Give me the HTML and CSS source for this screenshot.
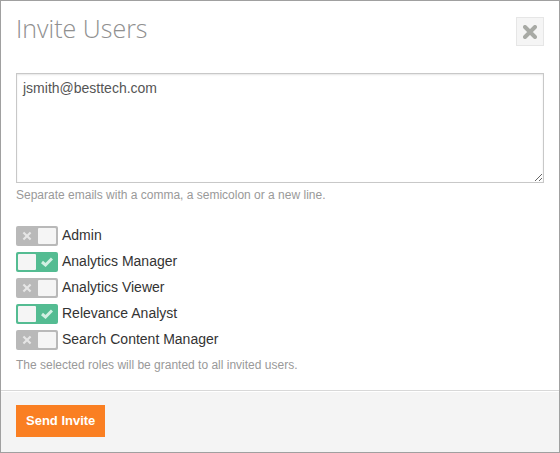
FILE: index.html
```html
<!DOCTYPE html>
<html lang="en">
<head>
  <meta charset="UTF-8" />
  <title>Invite Users</title>
  <link rel="stylesheet" href="styles.css">
</head>
<body>

  <!-- Shared icons -->
  <svg class="sprite" aria-hidden="true">
    <symbol id="cross" viewBox="0 0 14 14">
      <path d="M2 2 L12 12 M12 2 L2 12" />
    </symbol>
    <symbol id="check" viewBox="0 0 12 10">
      <path d="M1 5 L4.5 8 L11 1.5" />
    </symbol>
  </svg>

  <form class="modal">
    <div class="modal-header">
      <h1>Invite Users</h1>
      <button type="button" class="close" aria-label="Close">
        <svg class="icon"><use href="#cross" /></svg>
      </button>
    </div>

    <div class="modal-body">
      <textarea id="emails" aria-label="Emails" aria-describedby="emailsHint" spellcheck="false">jsmith@besttech.com</textarea>
      <p class="hint" id="emailsHint">Separate emails with a comma, a semicolon or a new line.</p>

      <div class="roles">
        <label class="role">
          <span class="switch">
            <input type="checkbox" name="role" value="admin" />
            <svg class="off"><use href="#cross" /></svg>
            <svg class="on"><use href="#check" /></svg>
          </span>
          Admin
        </label>
        <label class="role">
          <span class="switch">
            <input type="checkbox" name="role" value="analytics-manager" checked />
            <svg class="off"><use href="#cross" /></svg>
            <svg class="on"><use href="#check" /></svg>
          </span>
          Analytics Manager
        </label>
        <label class="role">
          <span class="switch">
            <input type="checkbox" name="role" value="analytics-viewer" />
            <svg class="off"><use href="#cross" /></svg>
            <svg class="on"><use href="#check" /></svg>
          </span>
          Analytics Viewer
        </label>
        <label class="role">
          <span class="switch">
            <input type="checkbox" name="role" value="relevance-analyst" checked />
            <svg class="off"><use href="#cross" /></svg>
            <svg class="on"><use href="#check" /></svg>
          </span>
          Relevance Analyst
        </label>
        <label class="role">
          <span class="switch">
            <input type="checkbox" name="role" value="search-content-manager" />
            <svg class="off"><use href="#cross" /></svg>
            <svg class="on"><use href="#check" /></svg>
          </span>
          Search Content Manager
        </label>
      </div>
      <p class="hint">The selected roles will be granted to all invited users.</p>
    </div>

    <div class="modal-footer">
      <button type="submit" class="send">Send Invite</button>
    </div>
  </form>

</body>
</html>
```
FILE: styles.css
```css
* {
  box-sizing: border-box;
}

body {
  margin: 0;
  font-family: "Liberation Sans", Arial, sans-serif;
  font-size: 14px;
  color: #333;
  background: #fff;
}

.sprite {
  display: none;
}

.modal {
  display: flex;
  flex-direction: column;
  min-height: 100vh;
  border: 1px solid #a0a0a0;
}

.modal-header {
  display: flex;
  justify-content: space-between;
  align-items: flex-start;
  padding: 16px 15px 0;
}

h1 {
  margin: 0;
  font-family: "Open Sans", sans-serif;
  font-size: 25px;
  font-weight: 300;
  line-height: 22px;
  color: #909090;
}

.close {
  display: flex;
  align-items: center;
  justify-content: center;
  width: 28px;
  height: 29px;
  padding: 0;
  border: 1px solid #e6e6e6;
  background: #f5f5f5;
  cursor: pointer;
}

.close .icon {
  width: 14px;
  height: 14px;
  stroke: #a8aaa5;
  stroke-width: 4;
  stroke-linecap: round;
}

.modal-body {
  flex: 1;
  padding: 27px 15px 16px;
}

textarea {
  display: block;
  width: 100%;
  height: 110px;
  padding: 6px;
  border: 1px solid #c8c8c8;
  box-shadow: inset 0 1px 2px rgba(0, 0, 0, 0.1);
  font: inherit;
  line-height: 16px;
  color: #555;
  outline: none;
}

.hint {
  margin: 4px 0 0;
  font-size: 12px;
  line-height: 16px;
  color: #999;
}

.roles {
  display: flex;
  flex-direction: column;
  align-items: flex-start;
  gap: 6px;
  margin: 23px 0 7px;
}

.role {
  display: flex;
  align-items: flex-start;
  gap: 4px;
  line-height: 18px;
  cursor: pointer;
}

.switch {
  position: relative;
  width: 42px;
  height: 20px;
}

.switch input {
  appearance: none;
  display: flex;
  justify-content: flex-end;
  width: 100%;
  height: 100%;
  margin: 0;
  padding: 2px;
  border-radius: 2px;
  background: #b9b9b9;
}

/* knob */
.switch input::before {
  content: "";
  width: 18px;
  height: 16px;
  border-radius: 1px;
  background: #f5f5f5;
}

.switch input:checked {
  justify-content: flex-start;
  background: #54bc92;
}

.switch svg {
  position: absolute;
  fill: none;
  stroke: #e6e6e6;
  pointer-events: none;
}

.switch .off {
  top: 5px;
  left: 6px;
  width: 10px;
  height: 10px;
  stroke-width: 3;
}

.switch .on {
  display: none;
  top: 5px;
  right: 5px;
  width: 12px;
  height: 10px;
  stroke: #d2f0e3;
  stroke-width: 3;
}

.switch input:checked ~ .off {
  display: none;
}

.switch input:checked ~ .on {
  display: block;
}

.modal-footer {
  padding: 14px 15px 15px;
  border-top: 1px solid #d8d8d8;
  box-shadow: inset 0 1px 0 #fff;
  background: #f4f4f4;
}

.send {
  display: block;
  height: 32px;
  padding: 0 10px 1px;
  border: 0;
  background: #fa7f22;
  font: bold 13px "Liberation Sans", Arial, sans-serif;
  color: #fff;
  cursor: pointer;
}
```
